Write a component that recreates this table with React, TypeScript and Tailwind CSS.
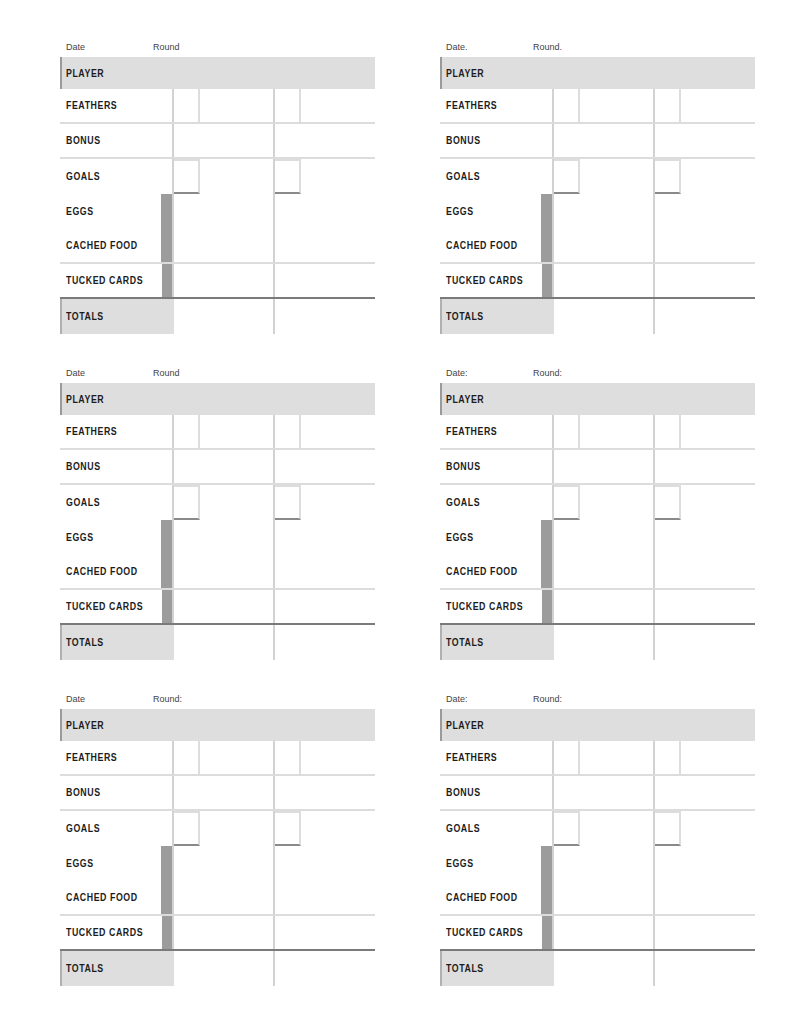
const ROWS = [
  { label: 'FEATHERS', box: true, bar: false, line: 'light' },
  { label: 'BONUS', box: false, bar: false, line: 'light' },
  { label: 'GOALS', box: true, bar: false, line: 'none' },
  { label: 'EGGS', box: false, bar: true, line: 'none' },
  { label: 'CACHED FOOD', box: false, bar: true, line: 'light' },
  { label: 'TUCKED CARDS', box: false, bar: true, line: 'dark' },
]

const CARDS = [
  { date: 'Date', round: 'Round' },
  { date: 'Date.', round: 'Round.' },
  { date: 'Date', round: 'Round' },
  { date: 'Date:', round: 'Round:' },
  { date: 'Date', round: 'Round:' },
  { date: 'Date:', round: 'Round:' },
]

// narrow, tall caps like the printed sheet
const labelCls =
  "inline-block whitespace-nowrap origin-left scale-x-[0.8] text-[11px] leading-none font-bold tracking-[0.7px] text-[#1c1c1c] font-['Liberation_Sans',Arial,sans-serif]"

function ScoreCell({ box, goals }: { box: boolean; goals: boolean }) {
  return (
    <div className="w-[101px] h-full border-l-2 border-[#d2d2d2] flex">
      {box && (
        <div
          className={`w-[26px] h-full border-r-2 border-[#dddddd] ${
            goals ? 'border-b-2 border-b-[#8a8a8a] border-t-2 border-t-[#dddddd]' : ''
          }`}
        />
      )}
    </div>
  )
}

function ScoreCard({ date, round }: { date: string; round: string }) {
  return (
    <div className="w-[315px] flex flex-col">
      {/* header */}
      <div className="h-[17px] flex items-start pt-[1px] text-[9px] text-[#444] font-['Liberation_Sans',Arial,sans-serif]">
        <span className="w-[93px] pl-[6px]">{date}</span>
        <span>{round}</span>
      </div>

      <div className="h-[32px] bg-[#dedede] border-l-2 border-[#9a9a9a] flex items-center pl-[4px]">
        <span className={labelCls}>PLAYER</span>
      </div>

      {ROWS.map((r) => (
        <div
          key={r.label}
          className={`h-[35px] flex ${
            r.line === 'light'
              ? 'border-b-2 border-[#dcdcdc]'
              : r.line === 'dark'
              ? 'border-b-2 border-[#7a7a7a]'
              : ''
          }`}
        >
          <div className="w-[112px] h-full flex items-center justify-between">
            <div className="pl-[6px] flex items-center">
              <span className={labelCls}>{r.label}</span>
            </div>
            {r.bar && <div className="w-[11px] h-full bg-[#9c9c9c]" />}
          </div>
          <ScoreCell box={r.box} goals={r.label === 'GOALS'} />
          <ScoreCell box={r.box} goals={r.label === 'GOALS'} />
        </div>
      ))}

      <div className="h-[35px] flex">
        <div className="w-[114px] h-full bg-[#dedede] border-l-2 border-[#b0b0b0] flex items-center pl-[4px]">
          <span className={labelCls}>TOTALS</span>
        </div>
        <div className="w-[99px] h-full" />
        <div className="w-[101px] h-full border-l-2 border-[#d2d2d2]" />
      </div>
    </div>
  )
}

export default function App() {
  return (
    <div className="w-[800px] h-[1035px] bg-white pt-[40px] pl-[60px]">
      <div className="grid grid-cols-[315px_315px] gap-x-[65px] gap-y-[32px]">
        {CARDS.map((c, i) => (
          <ScoreCard key={i} date={c.date} round={c.round} />
        ))}
      </div>
    </div>
  )
}
